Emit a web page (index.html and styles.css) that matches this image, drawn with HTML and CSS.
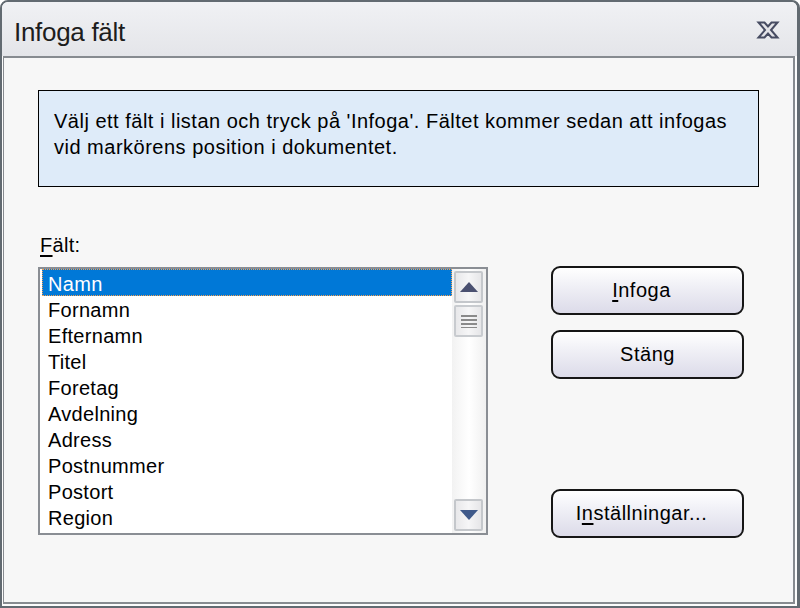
FILE: index.html
```html
<!DOCTYPE html>
<html lang="sv">
<head>
<meta charset="utf-8">
<title>Infoga fält</title>
<link rel="stylesheet" href="styles.css">
</head>
<body>
<div class="window">
  <div class="titlebar">
    <span class="title">Infoga fält</span>
    <svg class="close" width="24" height="20" viewBox="0 0 24 20">
      <path d="M2.5 2.5 H8.5 L12 6.5 L15.5 2.5 H21.5 L15 10 L21.5 17.5 H15.5 L12 13.5 L8.5 17.5 H2.5 L9 10 Z" fill="#e4e4e8" stroke="#474c62" stroke-width="2" stroke-linejoin="miter"/>
    </svg>
  </div>
  <div class="client">
    <div class="info">Välj ett fält i listan och tryck på 'Infoga'. Fältet kommer sedan att infogas<br>vid markörens position i dokumentet.</div>
    <div class="label"><u>F</u>ält:</div>
    <div class="main">
      <div class="listbox">
        <ul class="items">
          <li class="selected">Namn</li>
          <li>Fornamn</li>
          <li>Efternamn</li>
          <li>Titel</li>
          <li>Foretag</li>
          <li>Avdelning</li>
          <li>Adress</li>
          <li>Postnummer</li>
          <li>Postort</li>
          <li>Region</li>
        </ul>
        <div class="scrollbar">
          <div class="sbtn">
            <svg width="22" height="12" viewBox="0 0 22 12"><path d="M11 1 L20 11 H2 Z" fill="#4a5070"/></svg>
          </div>
          <div class="thumb">
            <svg width="20" height="14" viewBox="0 0 20 14"><g fill="#8a8a8a"><rect x="2" y="1" width="16" height="2"/><rect x="2" y="5" width="16" height="2"/><rect x="2" y="9" width="16" height="2"/><rect x="2" y="13" width="16" height="1"/></g></svg>
          </div>
          <div class="track"></div>
          <div class="sbtn">
            <svg width="22" height="12" viewBox="0 0 22 12"><path d="M2 1 H20 L11 11 Z" fill="#3f5a8a"/></svg>
          </div>
        </div>
      </div>
      <div class="buttons">
        <button class="btn btn-left"><u>I</u>nfoga</button>
        <button class="btn">Stäng</button>
        <div class="spacer"></div>
        <button class="btn btn-left">I<u>n</u>ställningar...</button>
      </div>
    </div>
  </div>
</div>
</body>
</html>
```
FILE: styles.css
```css
* { box-sizing: border-box; }
html, body { margin: 0; padding: 0; background: #ffffff; }
body { font-family: "Liberation Sans", Arial, sans-serif; }

.window {
  width: 800px;
  height: 608px;
  border: 2px solid #626a71;
  border-right-width: 3px;
  border-radius: 8px 8px 0 0;
  background: #fcfcfc;
  padding: 0 2px 2px 1px;
  display: flex;
  flex-direction: column;
}

.titlebar {
  height: 54px;
  margin: 0 -2px 0 -1px;
  border-radius: 6px 6px 0 0;
  background: linear-gradient(#f0f1f4, #e4e5e9);
  display: flex;
  align-items: center;
  justify-content: space-between;
  padding: 7px 17px 0 12px;
}
.title {
  font-size: 26px;
  color: #1d1d1d;
  letter-spacing: -0.3px;
}
.close { margin-top: -5px; }

.client {
  flex: 1;
  background: #f7f7f7;
  border-top: 2px solid #878b90;
  border-left: 1px solid #878b90;
  border-right: 2px solid #878b90;
  border-bottom: 2px solid #878b90;
  padding: 32px 34px 0 34px;
  display: flex;
  flex-direction: column;
  font-size: 20px;
  letter-spacing: 0.3px;
  color: #000;
}

.info {
  height: 97px;
  border: 1px solid #000;
  background: #deebf9;
  padding: 17px 15px 0 15px;
  line-height: 26px;
  font-size: 20px;
  letter-spacing: 0.5px;
}

.label {
  margin-top: 46px;
  height: 34px;
  line-height: 24px;
  padding-left: 2px;
}

.main {
  display: flex;
  align-items: flex-start;
}

.listbox {
  width: 450px;
  height: 268px;
  border: 2px solid #8a8e94;
  background: #fff;
  display: flex;
}
.items {
  list-style: none;
  margin: 0;
  padding: 0 0 2px 2px;
  flex: 1;
}
.items li {
  height: 26px;
  line-height: 22px;
  padding: 3px 0 0 5px;
  border: 1px solid transparent;
}
.items li.selected {
  background: #0078d7;
  color: #fff;
  border: 1px dotted #f5a050;
  height: 27px;
  padding-top: 3px;
}
.items li.selected + li { margin-top: -1px; }

.scrollbar {
  width: 34px;
  padding: 2px 3px 2px 2px;
  display: flex;
  flex-direction: column;
  background: linear-gradient(90deg, #f2f2f2, #ffffff 50%, #f0f0f0);
}
.sbtn, .thumb {
  height: 32px;
  border: 2px solid #c4c7cb;
  border-radius: 2px;
  background: linear-gradient(90deg, #e8e8ea, #f6f6f7 50%, #e6e6e8);
  display: flex;
  align-items: center;
  justify-content: center;
}
.thumb { margin-top: 2px; border-color: #c8cbcf; }
.track { flex: 1; }

.buttons {
  margin-left: 63px;
  margin-top: -1px;
  width: 193px;
  height: 272px;
  display: flex;
  flex-direction: column;
}
.btn {
  height: 49px;
  border: 2px solid #161616;
  border-radius: 9px;
  background: linear-gradient(#ffffff, #f0f0f6 40%, #dcdbe9);
  font-family: "Liberation Sans", Arial, sans-serif;
  font-size: 20px;
  letter-spacing: 0.5px;
  color: #000;
  padding: 0;
  margin-bottom: 15px;
}
.btn-left { padding-right: 12px; }
.btn:last-child { margin-bottom: 0; }
.spacer { flex: 1; }
u { text-decoration-thickness: 2px; text-underline-offset: 3px; }
```
